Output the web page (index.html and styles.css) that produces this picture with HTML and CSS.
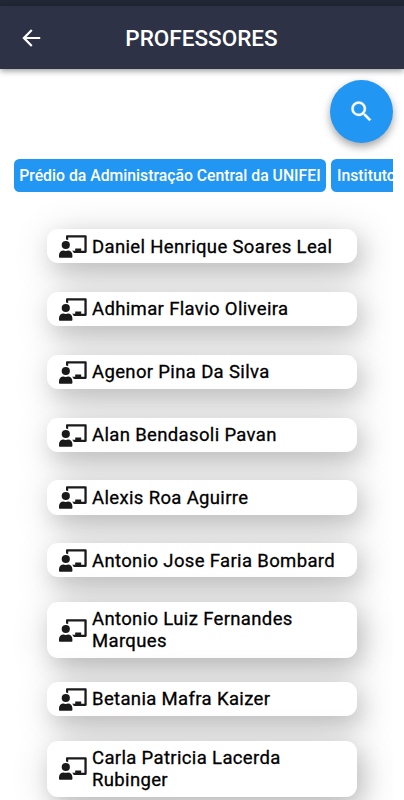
FILE: index.html
```html
<!DOCTYPE html>
<html lang="pt-BR">
<head>
    <meta charset="UTF-8">
    <meta name="viewport" content="width=device-width, initial-scale=1.0">
    <title>Professores</title>
    <link rel="stylesheet" href="styles.css">
</head>
<body>
    <svg width="0" height="0" class="sprite">
        <symbol id="teacher" viewBox="0 0 28 23">
            <circle cx="6.800" cy="10" r="4.100"/>
            <path d="M0 21.800v-1.600c0-3 2-4.700 4.400-4.700.8.500 3.800.5 4.600 0 2.400 0 4.400 1.700 4.400 4.700v1.600c0 .6-.4 1-1 1H1c-.6 0-1-.4-1-1z"/>
            <path d="M7 4.600V1.300C7 .6 7.500.200 8.100.200h18.400c.7 0 1.200.5 1.200 1.200v15.300c0 .7-.5 1.200-1.200 1.200H14.800c-.3-.9-.9-1.600-1.800-2.200h3.200v-2.200h6v2.200h3.200V2.500H9.200v2.700C8.500 4.800 7.800 4.600 7 4.600z"/>
        </symbol>
    </svg>

    <div class="status-bar"></div>
    <header class="app-bar">
        <svg class="back-icon" viewBox="0 0 24 24"><path d="M20.500 11H7.830l5.590-5.590L12 4l-8 8 8 8 1.410-1.410L7.830 13H20.500v-2z"/></svg>
        <h1 class="title">PROFESSORES</h1>
    </header>

    <main class="content">
        <button class="search-btn" aria-label="Buscar">
            <svg viewBox="0 0 24 24"><path d="M15.500 14h-.79l-.28-.27A6.471 6.471 0 0 0 16 9.500 6.500 6.500 0 1 0 9.500 16c1.610 0 3.090-.59 4.230-1.570l.27.28v.79l5 4.990L20.490 19l-4.990-5zm-6 0C7.010 14 5 11.990 5 9.500S7.010 5 9.500 5 14 7.010 14 9.500 11.990 14 9.500 14z"/></svg>
        </button>

        <div class="filters">
            <span class="filter">Prédio da Administração Central da UNIFEI</span>
            <span class="filter">Instituto</span>
        </div>

        <ul class="list">
            <li class="item"><div class="card"><svg class="icon"><use href="#teacher"/></svg><span class="name">Daniel Henrique Soares Leal</span></div></li>
            <li class="item"><div class="card"><svg class="icon"><use href="#teacher"/></svg><span class="name">Adhimar Flavio Oliveira</span></div></li>
            <li class="item"><div class="card"><svg class="icon"><use href="#teacher"/></svg><span class="name">Agenor Pina Da Silva</span></div></li>
            <li class="item"><div class="card"><svg class="icon"><use href="#teacher"/></svg><span class="name">Alan Bendasoli Pavan</span></div></li>
            <li class="item"><div class="card"><svg class="icon"><use href="#teacher"/></svg><span class="name">Alexis Roa Aguirre</span></div></li>
            <li class="item"><div class="card"><svg class="icon"><use href="#teacher"/></svg><span class="name">Antonio Jose Faria Bombard</span></div></li>
            <li class="item"><div class="card"><svg class="icon"><use href="#teacher"/></svg><span class="name">Antonio Luiz Fernandes Marques</span></div></li>
            <li class="item"><div class="card"><svg class="icon"><use href="#teacher"/></svg><span class="name">Betania Mafra Kaizer</span></div></li>
            <li class="item"><div class="card"><svg class="icon"><use href="#teacher"/></svg><span class="name">Carla Patricia Lacerda Rubinger</span></div></li>
        </ul>
    </main>
</body>
</html>
```

FILE: styles.css
```css
* {
    box-sizing: border-box;
}
body {
    font-family: Roboto, sans-serif;
    margin: 0;
    height: 100vh;
    overflow: hidden;
    display: flex;
    flex-direction: column;
    background-color: #fff;
    color: #000;
}
.sprite {
    position: absolute;
}
.status-bar {
    height: 6px;
    flex-shrink: 0;
    background-color: #222735;
}
.app-bar {
    display: flex;
    align-items: center;
    height: 63px;
    flex-shrink: 0;
    padding: 0 20px;
    background-color: #2d3246;
    box-shadow: 0 2px 6px rgba(0,0,0,0.4);
}
.back-icon {
    width: 26px;
    height: 26px;
    margin-left: -2px;
    fill: #fff;
}
.title {
    flex: 1;
    margin: 0 25px 0 0;
    font-size: 22.5px;
    font-weight: 500;
    text-align: center;
    color: #fff;
}
.content {
    flex: 1;
    min-height: 0;
    display: flex;
    flex-direction: column;
    margin-right: 11px;
    padding-top: 11px;
}
.search-btn {
    align-self: flex-end;
    display: flex;
    align-items: center;
    justify-content: center;
    flex-shrink: 0;
    width: 63px;
    height: 63px;
    padding: 0;
    border: none;
    border-radius: 50%;
    background-color: #2196f3;
    box-shadow: 0 4px 8px rgba(0,0,0,0.36);
}
.search-btn svg {
    width: 27px;
    height: 27px;
    fill: #fff;
    stroke: #fff;
    stroke-width: 0.3;
}
.filters {
    display: flex;
    flex-shrink: 0;
    gap: 5px;
    margin: 16px 0 0 13.500px;
    overflow: hidden;
}
.filter {
    flex-shrink: 0;
    height: 33px;
    padding: 0 5.700px;
    border-radius: 5.500px;
    background-color: #2196f3;
    color: #fff;
    font-size: 15.780px;
    font-weight: 500;
    line-height: 33px;
    white-space: nowrap;
}
.list {
    flex: 1;
    min-height: 0;
    margin: -25px 0 0;
    padding: 48px 36px 0 47px;
    overflow: hidden;
    list-style: none;
}
.item {
    display: flex;
    align-items: center;
    min-height: 62.8px;
    padding: 10px 0;
}
.card {
    display: flex;
    align-items: center;
    width: 100%;
    padding: 6px 11.500px 5.200px;
    border-radius: 11px;
    background-color: #fff;
    box-shadow: 5px 9px 22px rgba(0,0,0,0.15), 5px 8px 42px rgba(0,0,0,0.19);
}
.icon {
    flex-shrink: 0;
    width: 28px;
    height: 23px;
    margin-right: 5.500px;
    fill: #1a1a1a;
}
.name {
    font-size: 18.500px;
    font-weight: 400;
    line-height: 22.400px;
    letter-spacing: 0.350px;
    -webkit-text-stroke: 0.3px #000;
}
```
